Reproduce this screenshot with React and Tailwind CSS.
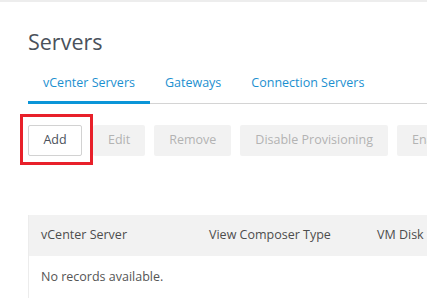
export default function App() {
  const tabs = ["vCenter Servers", "Gateways", "Connection Servers"];
  const disabled = ["Edit", "Remove", "Disable Provisioning", "Enable Provisioning"];
  return (
    <div className="w-[427px] h-[300px] overflow-hidden bg-white font-['Open_Sans',sans-serif]">
      <div className="h-[2px] bg-[#ededed]" />
      <div className="pl-[28px] w-[700px]">
        <h1 className="mt-[25px] text-[21.5px] leading-[30px] text-[#4a515b] font-normal">Servers</h1>
        <div className="mt-[18px] flex border-b border-[#d4d4d4]">
          {tabs.map((t, i) => (
            <div
              key={t}
              className={
                i === 0
                  ? "px-[15px] pb-[10px] text-[12.5px] leading-[16px] text-[#1c90d0] border-b-[3px] border-[#0a95d8] -mb-px"
                  : "px-[15px] pb-[10px] text-[12.5px] leading-[16px] text-[#1c90d0] border-b-[3px] border-transparent -mb-px"
              }
            >
              {t}
            </div>
          ))}
        </div>
        <div className="mt-[21px] flex gap-[9px]">
          <div className="relative mr-[2px]">
            <button className="h-[31px] w-[54px] text-[12.5px] text-[#4a515b] bg-white border border-[#d2d2d2] rounded-[2px]">
              Add
            </button>
            <div className="absolute -left-[8px] -top-[11px] w-[73px] h-[51px] border-[3px] border-[#e8202a]" />
          </div>
          {disabled.map((b) => (
            <button
              key={b}
              className="h-[31px] px-[15px] text-[12.5px] text-[#b3b3b3] bg-[#f2f2f2] rounded-[2px] whitespace-nowrap"
            >
              {b}
            </button>
          ))}
        </div>
        <div className="mt-[59px] border-l border-[#ececec]">
          <div className="flex h-[41px] items-center bg-[#f2f2f2] text-[12.5px] text-[#4d4d4d]">
            <div className="w-[168px] pl-[12px]">vCenter Server</div>
            <div className="w-[168px] pl-[12px]">View Composer Type</div>
            <div className="w-[168px] pl-[12px] whitespace-nowrap">VM Disk Space Reclamation</div>
          </div>
          <div className="flex h-[42px] items-center pl-[12px] text-[12.5px] text-[#555]">
            No records available.
          </div>
        </div>
      </div>
    </div>
  );
}
